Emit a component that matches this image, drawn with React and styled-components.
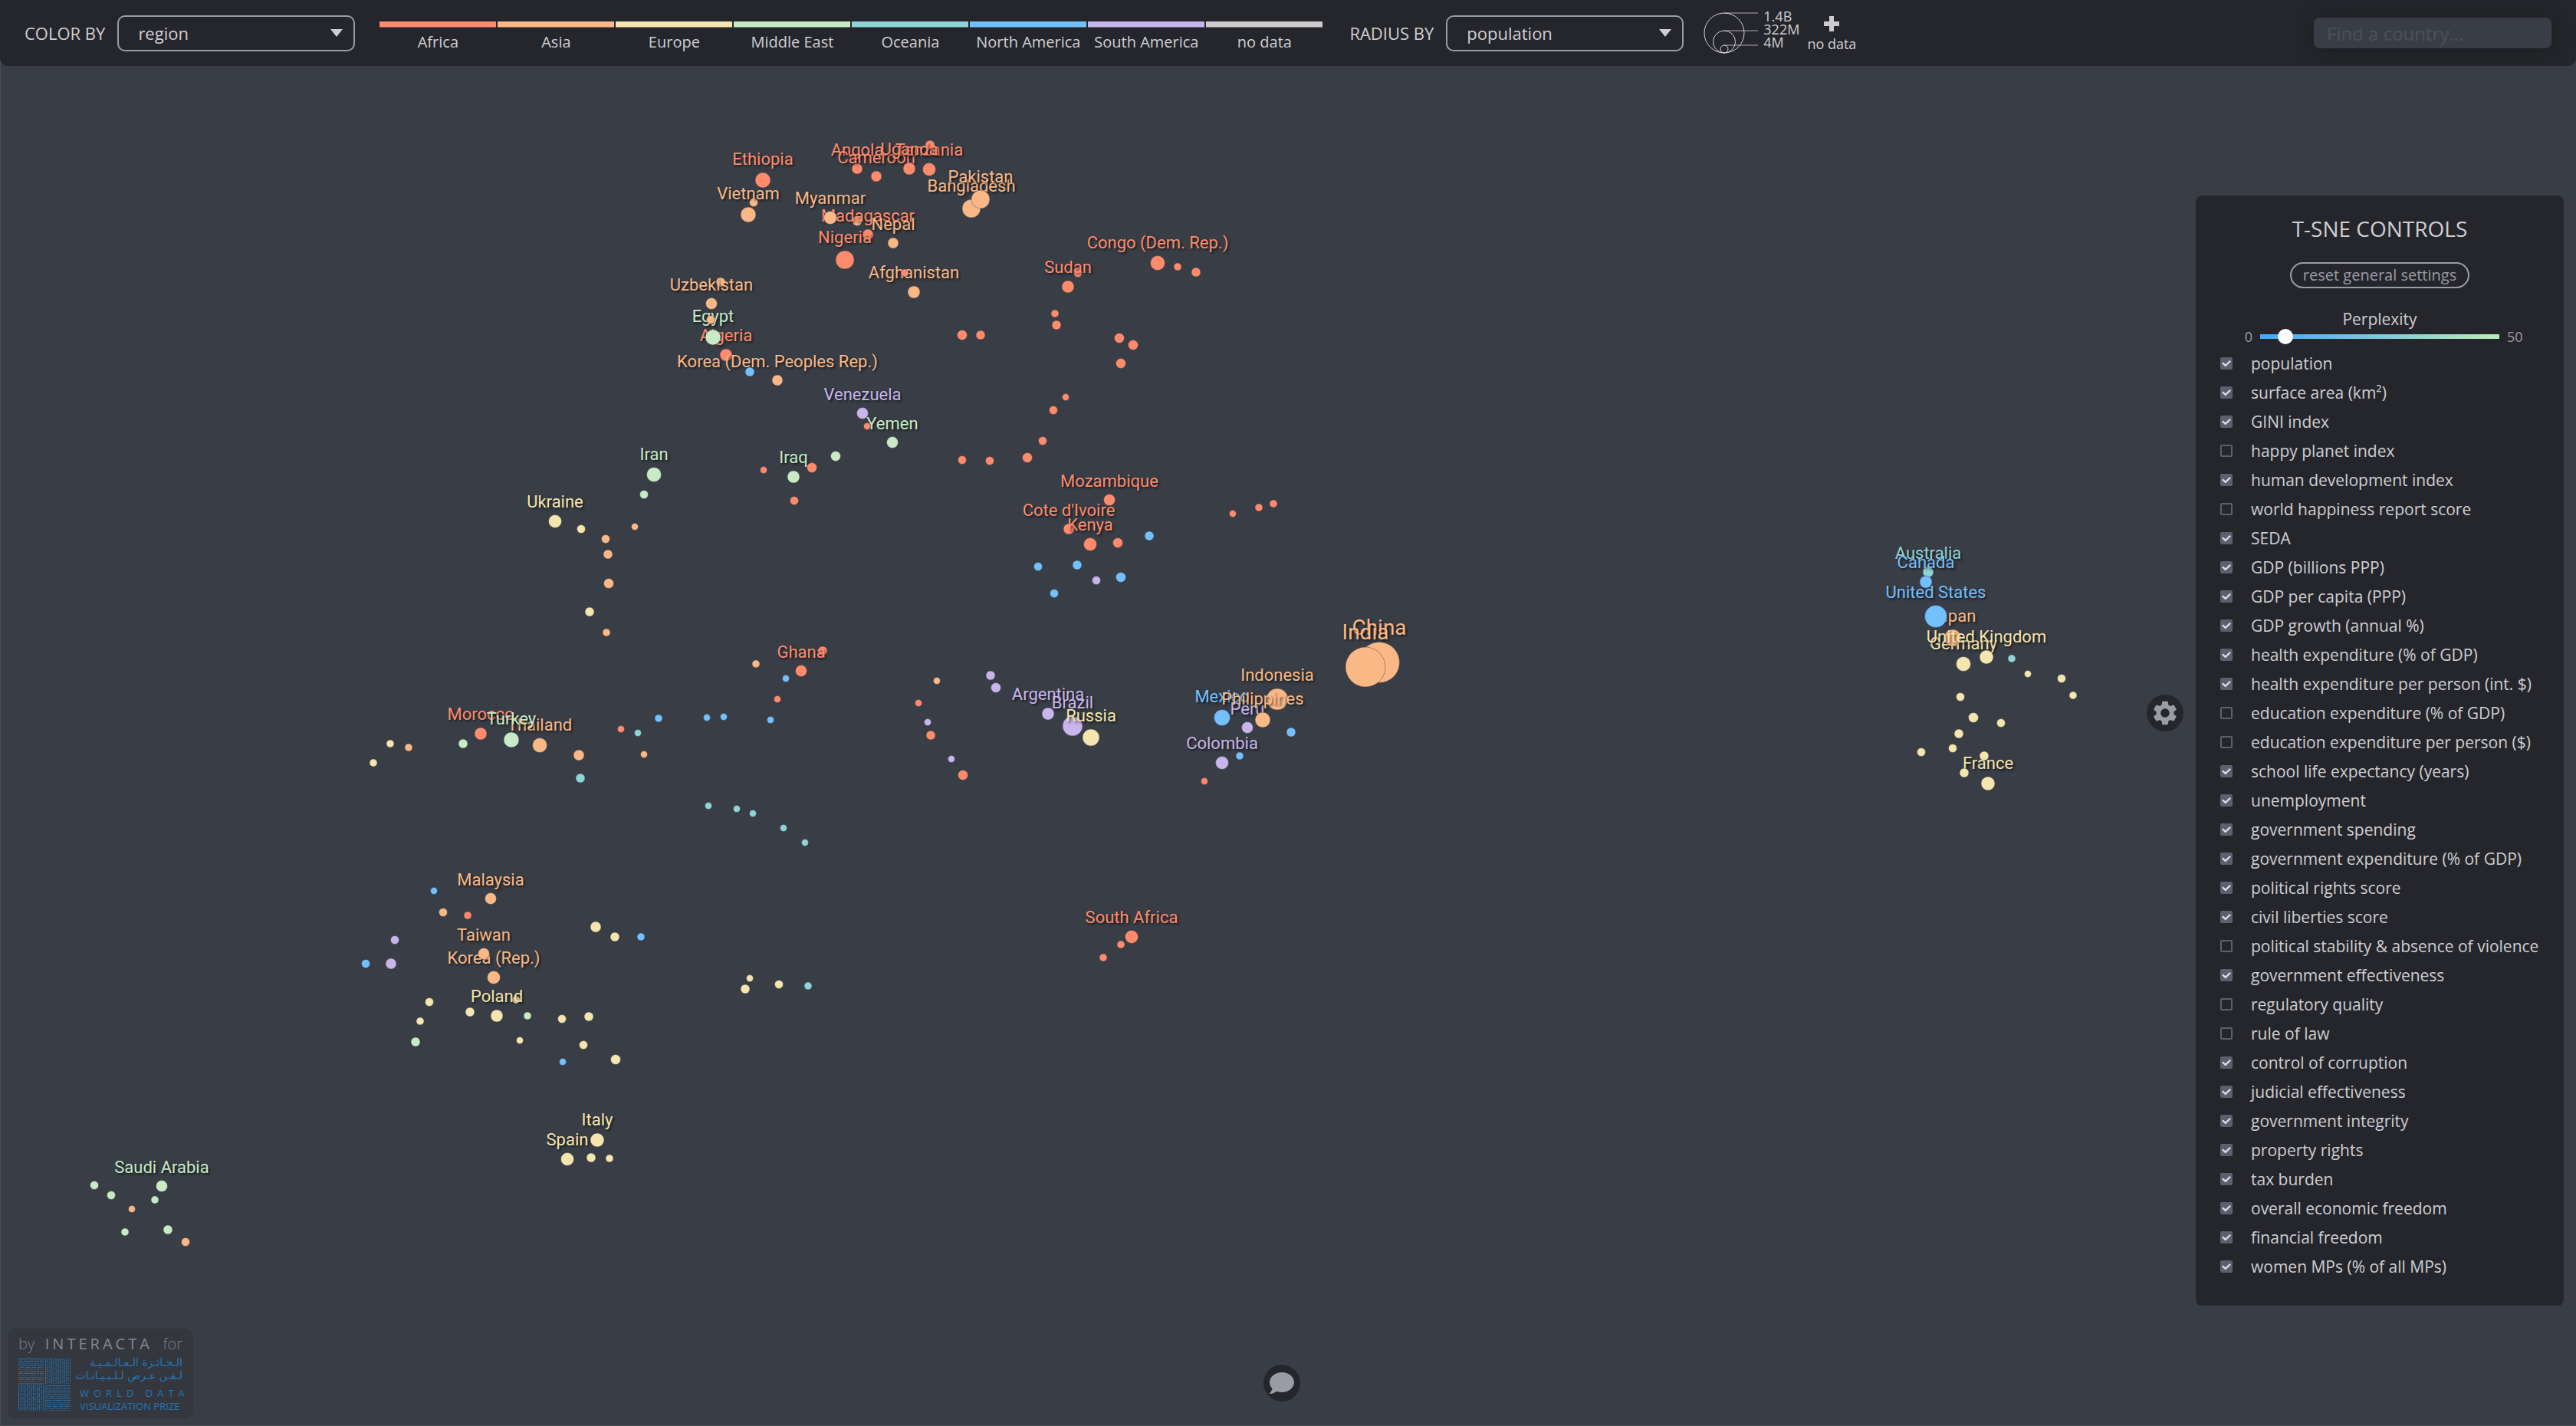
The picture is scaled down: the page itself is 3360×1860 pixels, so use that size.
import React, { useState } from 'react';
import styled, { createGlobalStyle } from 'styled-components';
import { MdSettings } from 'react-icons/md';
import { FaComment } from 'react-icons/fa';

const ink = {
  page: '#393e46',
  panel: '#25262b',
  text: '#cfcfd3',
  muted: '#9b9ba6',
  control: '#5b606e',
};

const regionColors = {
  Africa: '#ff8a6c',
  Asia: '#f9b886',
  Europe: '#f5e5ae',
  'Middle East': '#c8ebc6',
  Oceania: '#8fd4d6',
  'North America': '#73c0ff',
  'South America': '#c7b5eb',
  'no data': '#cccccc',
};

const codes = {
  af: 'Africa',
  as: 'Asia',
  eu: 'Europe',
  me: 'Middle East',
  oc: 'Oceania',
  na: 'North America',
  sa: 'South America',
};

/* Each entry: x, y, diameter, region code, optional label */
const countries = [
  [983, 264, 11, 'as'], [1118, 288, 13, 'as'], [1213, 189, 12, 'af'], [940, 368, 12, 'as'],
  [1406, 356, 11, 'af'], [1131, 556, 9, 'af'], [1073, 849, 12, 'af'], [673, 1304, 10, 'eu'],
  [1192, 381, 16, 'as', 'Afghanistan'],
  [947, 463, 16, 'af', 'Algeria'],
  [1118, 220, 14, 'af', 'Angola'],
  [1367, 931, 16, 'sa', 'Argentina'],
  [2515, 746, 14, 'oc', 'Australia'],
  [1267, 272, 24, 'as', 'Bangladesh'],
  [1399, 947, 26, 'sa', 'Brazil'],
  [1143, 230, 14, 'af', 'Cameroon'],
  [2512, 759, 16, 'na', 'Canada'],
  [1799, 864, 53, 'as', 'China'],
  [1594, 995, 17, 'sa', 'Colombia'],
  [1510, 343, 19, 'af', 'Congo (Dem. Rep.)'],
  [1394, 690, 14, 'af', "Cote d'Ivoire"],
  [930, 440, 20, 'me', 'Egypt'],
  [995, 235, 20, 'af', 'Ethiopia'],
  [2593, 1022, 18, 'eu', 'France'],
  [2561, 866, 19, 'eu', 'Germany'],
  [1045, 875, 15, 'af', 'Ghana'],
  [1781, 870, 52, 'as', 'India'],
  [1666, 912, 28, 'as', 'Indonesia'],
  [853, 619, 19, 'me', 'Iran'],
  [1035, 622, 16, 'me', 'Iraq'],
  [779, 1487, 18, 'eu', 'Italy'],
  [2547, 832, 22, 'as', 'Japan'],
  [1422, 710, 17, 'af', 'Kenya'],
  [1014, 496, 14, 'as', 'Korea (Dem. Peoples Rep.)'],
  [644, 1275, 17, 'as', 'Korea (Rep.)'],
  [1132, 306, 14, 'af', 'Madagascar'],
  [640, 1172, 15, 'as', 'Malaysia'],
  [1594, 936, 21, 'na', 'Mexico'],
  [627, 957, 16, 'af', 'Morocco'],
  [1447, 652, 15, 'af', 'Mozambique'],
  [1083, 284, 17, 'as', 'Myanmar'],
  [1165, 317, 14, 'as', 'Nepal'],
  [1102, 339, 24, 'af', 'Nigeria'],
  [1279, 260, 24, 'as', 'Pakistan'],
  [1627, 949, 15, 'sa', 'Peru'],
  [1647, 939, 20, 'as', 'Philippines'],
  [648, 1325, 16, 'eu', 'Poland'],
  [1423, 962, 22, 'eu', 'Russia'],
  [211, 1547, 15, 'me', 'Saudi Arabia'],
  [1476, 1222, 17, 'af', 'South Africa'],
  [740, 1512, 17, 'eu', 'Spain'],
  [1393, 374, 16, 'af', 'Sudan'],
  [631, 1244, 15, 'as', 'Taiwan'],
  [1212, 221, 17, 'af', 'Tanzania'],
  [704, 972, 19, 'as', 'Thailand'],
  [667, 965, 20, 'me', 'Turkey'],
  [1186, 220, 16, 'af', 'Uganda'],
  [724, 680, 17, 'eu', 'Ukraine'],
  [2591, 857, 18, 'eu', 'United Kingdom'],
  [2525, 804, 29, 'na', 'United States'],
  [928, 396, 15, 'as', 'Uzbekistan'],
  [1125, 539, 15, 'sa', 'Venezuela'],
  [976, 280, 20, 'as', 'Vietnam'],
  [1164, 577, 15, 'me', 'Yemen'],
  [1180, 356, 10, 'af'], [927, 417, 11, 'as'], [978, 485, 12, 'na'],
  [1536, 348, 10, 'af'], [1560, 355, 12, 'af'], [1376, 409, 10, 'af'], [1378, 424, 12, 'af'],
  [1255, 437, 13, 'af'], [1279, 437, 12, 'af'], [1460, 441, 13, 'af'], [1478, 450, 13, 'af'],
  [1462, 474, 13, 'af'], [1390, 518, 9, 'af'], [1374, 535, 11, 'af'], [1360, 575, 11, 'af'],
  [1340, 597, 13, 'af'], [1291, 601, 11, 'af'], [1255, 600, 11, 'af'], [1090, 595, 13, 'me'],
  [1059, 610, 13, 'af'], [996, 613, 9, 'af'], [1036, 653, 11, 'af'], [1458, 708, 13, 'af'],
  [1499, 699, 12, 'na'], [1354, 739, 11, 'na'], [1405, 737, 12, 'na'], [1430, 757, 11, 'sa'],
  [1462, 753, 13, 'na'], [1375, 774, 11, 'na'], [1608, 670, 9, 'af'], [1642, 662, 10, 'af'],
  [1661, 657, 10, 'af'], [1684, 955, 12, 'na'], [1617, 986, 10, 'na'], [1571, 1019, 9, 'af'],
  [1292, 881, 12, 'sa'], [1299, 897, 13, 'sa'], [1222, 888, 9, 'as'], [1198, 917, 9, 'af'],
  [1210, 942, 9, 'sa'], [1214, 959, 12, 'af'], [1241, 990, 9, 'sa'], [1256, 1011, 13, 'af'],
  [1462, 1232, 10, 'af'], [1439, 1249, 10, 'af'],
  [840, 645, 11, 'me'], [758, 690, 11, 'eu'], [828, 687, 9, 'as'], [790, 703, 11, 'as'],
  [793, 723, 12, 'as'], [794, 761, 13, 'as'], [769, 798, 12, 'eu'], [791, 825, 10, 'as'],
  [986, 866, 10, 'as'], [1025, 885, 9, 'na'], [1014, 912, 9, 'af'], [859, 937, 10, 'na'],
  [922, 936, 9, 'na'], [944, 935, 9, 'na'], [1005, 939, 9, 'na'], [810, 951, 9, 'af'],
  [832, 956, 9, 'oc'], [840, 984, 9, 'as'], [604, 970, 12, 'me'], [755, 985, 14, 'as'],
  [757, 1015, 12, 'oc'], [509, 970, 10, 'eu'], [533, 975, 10, 'as'], [487, 995, 10, 'eu'],
  [924, 1051, 9, 'oc'], [961, 1055, 9, 'oc'], [982, 1061, 9, 'oc'], [1022, 1080, 9, 'oc'],
  [1050, 1099, 9, 'oc'], [566, 1162, 9, 'na'], [578, 1190, 11, 'as'], [610, 1194, 10, 'af'],
  [515, 1226, 11, 'sa'], [477, 1257, 11, 'na'], [510, 1257, 14, 'sa'], [777, 1209, 14, 'eu'],
  [802, 1222, 12, 'eu'], [836, 1222, 10, 'na'], [978, 1276, 9, 'eu'], [972, 1290, 12, 'eu'],
  [1016, 1284, 11, 'eu'], [1054, 1286, 10, 'oc'], [613, 1320, 12, 'eu'], [688, 1325, 10, 'me'],
  [560, 1307, 11, 'eu'], [548, 1332, 10, 'eu'], [542, 1359, 12, 'me'], [678, 1357, 9, 'eu'],
  [733, 1329, 11, 'eu'], [768, 1326, 12, 'eu'], [761, 1363, 11, 'eu'], [734, 1385, 9, 'na'],
  [803, 1382, 13, 'eu'], [771, 1510, 12, 'eu'], [795, 1511, 10, 'eu'],
  [123, 1546, 11, 'me'], [145, 1559, 11, 'me'], [172, 1577, 9, 'as'], [202, 1565, 10, 'me'],
  [163, 1607, 10, 'me'], [219, 1604, 12, 'me'], [242, 1620, 11, 'as'],
  [2624, 859, 10, 'oc'], [2645, 879, 9, 'eu'], [2689, 885, 11, 'eu'], [2704, 907, 10, 'eu'],
  [2557, 909, 11, 'eu'], [2574, 936, 13, 'eu'], [2610, 943, 11, 'eu'], [2555, 957, 12, 'eu'],
  [2547, 976, 11, 'eu'], [2506, 981, 11, 'eu'], [2588, 986, 12, 'eu'], [2562, 1008, 12, 'eu'],
];

const indicators = [
  ['population', true],
  ['surface area (km²)', true],
  ['GINI index', true],
  ['happy planet index', false],
  ['human development index', true],
  ['world happiness report score', false],
  ['SEDA', true],
  ['GDP (billions PPP)', true],
  ['GDP per capita (PPP)', true],
  ['GDP growth (annual %)', true],
  ['health expenditure (% of GDP)', true],
  ['health expenditure per person (int. $)', true],
  ['education expenditure (% of GDP)', false],
  ['education expenditure per person ($)', false],
  ['school life expectancy (years)', true],
  ['unemployment', true],
  ['government spending', true],
  ['government expenditure (% of GDP)', true],
  ['political rights score', true],
  ['civil liberties score', true],
  ['political stability & absence of violence', false],
  ['government effectiveness', true],
  ['regulatory quality', false],
  ['rule of law', false],
  ['control of corruption', true],
  ['judicial effectiveness', true],
  ['government integrity', true],
  ['property rights', true],
  ['tax burden', true],
  ['overall economic freedom', true],
  ['financial freedom', true],
  ['women MPs (% of all MPs)', true],
];

const GlobalStyle = createGlobalStyle`
  *, *::before, *::after { box-sizing: border-box; }
  body {
    margin: 0;
    background: ${ink.page};
    color: ${ink.text};
    font-family: 'Open Sans', 'Noto Sans', sans-serif;
  }
  button, input, select { font-family: inherit; margin: 0; }
`;

const Page = styled.div`
  position: relative;
  min-height: 100vh;
  overflow: hidden;
  box-shadow: inset 1px -1px 0 #4b4f57;
`;

const TopBar = styled.header`
  position: relative;
  display: flex;
  align-items: center;
  height: 86px;
  padding: 0 32px;
  background: ${ink.panel};
  border-radius: 0 0 10px 10px;
`;

const Field = styled.div`
  display: flex;
  align-items: center;
  gap: 16px;
`;

const FieldLabel = styled.label`
  font-size: 22px;
  line-height: 30px;
  white-space: nowrap;
`;

const SelectBox = styled.div`
  display: grid;
  align-items: center;
  width: 310px;
  height: 47px;

  > * { grid-area: 1 / 1; }
`;

const Select = styled.select`
  appearance: none;
  width: 100%;
  height: 100%;
  padding: 0 48px 0 25px;
  border: 2px solid ${ink.muted};
  border-radius: 10px;
  background: transparent;
  color: ${ink.text};
  font-size: 22px;
`;

const Caret = styled.svg`
  justify-self: end;
  width: 16px;
  height: 10px;
  margin-right: 16px;
  fill: ${ink.text};
  pointer-events: none;
`;

const ColorLegend = styled.ul`
  display: flex;
  gap: 2px;
  height: 86px;
  margin: 0 35px 0 32px;
  padding: 28px 0 0;
  list-style: none;
`;

const LegendItem = styled.li`
  width: 152px;
  font-size: 20px;
  line-height: 28px;
  text-align: center;
  white-space: nowrap;

  &::before {
    content: '';
    display: block;
    height: 8px;
    margin-bottom: 5px;
    border-bottom: 1px solid rgba(0, 0, 0, 0.4);
    background: ${(p) => p.$color};
  }
`;

const SizeLegend = styled.div`
  display: flex;
  align-items: center;
  height: 86px;
  margin-left: 25px;
`;

const SizeRings = styled.svg`
  width: 72px;
  height: 54px;
  fill: none;
  stroke: ${ink.text};
`;

const SizeValues = styled.div`
  display: flex;
  flex-direction: column;
  margin-left: 7px;
  padding-bottom: 10px;
  font-size: 18px;
  line-height: 17px;
`;

const NoDataKey = styled.div`
  display: flex;
  flex-direction: column;
  align-items: center;
  gap: 4px;
  margin-left: 10px;
  padding-top: 4px;
  font-size: 18px;
  line-height: 24px;
`;

const PlusIcon = styled.svg`
  width: 20px;
  height: 20px;
  fill: #cccccc;
`;

const Search = styled.input`
  width: 310px;
  height: 40px;
  margin-left: auto;
  padding: 0 17px;
  border: 0;
  border-radius: 8px;
  background: ${ink.page};
  box-shadow: 0 4px 24px rgba(0, 0, 0, 0.25);
  color: ${ink.text};
  font-size: 24px;

  &::placeholder { color: #4c505b; opacity: 1; }
`;

const Plot = styled.svg`
  position: absolute;
  top: 0;
  left: 0;
  width: 100%;
  height: auto;
`;

const Dot = styled.circle`
  stroke: rgba(58, 61, 70, 0.45);
  stroke-width: 1px;
`;

const DotLabel = styled.text`
  font-family: Roboto, 'Open Sans', sans-serif;
  font-size: ${(p) => (p.$large ? 28 : 22)}px;
  text-anchor: middle;
  text-shadow: 2px 2px 3px rgba(0, 0, 0, 0.6);
`;

const Panel = styled.aside`
  position: absolute;
  top: 255px;
  right: 16px;
  display: flex;
  flex-direction: column;
  align-items: center;
  width: 480px;
  padding: 24px 16px 32px 32px;
  background: ${ink.panel};
  border-radius: 8px;
`;

const PanelHead = styled.div`
  display: flex;
  flex-direction: column;
  align-items: center;
  width: 100%;
  padding-right: 16px;
`;

const PanelTitle = styled.h2`
  margin: 0;
  font-size: 28px;
  font-weight: 400;
  line-height: 38px;
`;

const ResetButton = styled.button`
  height: 34px;
  margin: 25px 0 26px;
  padding: 0 15px;
  border: 2px solid ${ink.muted};
  border-radius: 17px;
  background: transparent;
  color: ${ink.muted};
  font-size: 20px;
  line-height: 28px;
`;

const SliderLabel = styled.label`
  font-size: 21px;
  line-height: 28px;
`;

const SliderRow = styled.div`
  display: flex;
  align-items: center;
  justify-content: center;
  gap: 10px;
  height: 18px;
  margin-bottom: 7px;
`;

const SliderBound = styled.span`
  width: 22px;
  color: ${ink.muted};
  font-size: 18px;
  line-height: 24px;
  text-align: ${(p) => p.$align};
`;

const Slider = styled.input`
  appearance: none;
  width: 312px;
  height: 6px;
  background: linear-gradient(90deg, #3fa9ff, #bdecb6);
  outline: 0;

  &::-webkit-slider-thumb {
    appearance: none;
    width: 20px;
    height: 20px;
    border-radius: 50%;
    background: #ffffff;
  }
`;

const IndicatorList = styled.ul`
  width: 100%;
  margin: 0;
  padding: 0;
  list-style: none;
`;

const IndicatorRow = styled.label`
  display: flex;
  align-items: center;
  gap: 24px;
  height: 38px;
  font-size: 21px;
  line-height: 28px;
  white-space: nowrap;
`;

const Checkbox = styled.input`
  appearance: none;
  display: grid;
  place-items: center;
  flex: none;
  width: 16px;
  height: 16px;
  border: 2px solid ${ink.control};
  border-radius: 2px;

  &:checked { background: ${ink.control}; }

  &:checked::after {
    content: '';
    width: 12px;
    height: 10px;
    background: #dcdce0;
    clip-path: polygon(0 50%, 14% 34%, 40% 62%, 86% 10%, 100% 26%, 40% 94%);
  }
`;

const RoundButton = styled.button`
  position: absolute;
  display: grid;
  place-items: center;
  width: 48px;
  height: 48px;
  padding: 0;
  border: 0;
  border-radius: 50%;
  background: ${ink.panel};
  color: ${ink.muted};
`;

const SettingsButton = styled(RoundButton)`
  top: calc(50% - 24px);
  right: 512px;
`;

const FeedbackButton = styled(RoundButton)`
  bottom: 32px;
  left: calc(50% - 32px);
`;

const Credits = styled.footer`
  position: absolute;
  bottom: 10px;
  left: 10px;
  display: flex;
  flex-direction: column;
  gap: 6px;
  width: 242px;
  height: 117px;
  padding: 7px 14px;
  border-radius: 10px;
  background: #34373e;
`;

const Byline = styled.p`
  display: flex;
  align-items: baseline;
  justify-content: space-between;
  margin: 0;
  color: #7b7d85;
  font-size: 20px;
  font-weight: 300;
  line-height: 26px;
`;

const Studio = styled.a`
  color: #868890;
  font-weight: 400;
  letter-spacing: 4px;
  text-decoration: none;
`;

const Prize = styled.a`
  display: flex;
  align-items: center;
  justify-content: space-between;
  height: 68px;
  color: #2176b9;
  text-decoration: none;
`;

const PrizeMark = styled.svg`
  width: 68px;
  height: 68px;
  stroke: #2176b9;
  stroke-width: 1px;
`;

const PrizeName = styled.span`
  display: flex;
  flex-direction: column;
  width: 134px;
  font-size: 13px;
  line-height: 17px;
  white-space: nowrap;
`;

const Arabic = styled.span`
  font-family: 'DejaVu Sans', sans-serif;
  font-size: 14px;
  text-align: right;
`;

const WideWords = styled.span`
  margin-top: 6px;
  letter-spacing: 6px;
`;

function Dropdown({ id, label, options }) {
  return (
    <Field>
      <FieldLabel htmlFor={id}>{label}</FieldLabel>
      <SelectBox>
        <Select id={id} defaultValue={options[0]}>
          {options.map((o) => (
            <option key={o}>{o}</option>
          ))}
        </Select>
        <Caret viewBox="0 0 16 10" aria-hidden="true">
          <path d="M0 0h16L8 10z" />
        </Caret>
      </SelectBox>
    </Field>
  );
}

function Country({ x, y, size, region, name }) {
  const fill = regionColors[codes[region]];
  return (
    <g>
      <Dot cx={x} cy={y} r={size / 2} fill={fill} />
      {name && (
        <DotLabel x={x} y={Math.round(y - size / 2 - 10)} fill={fill} $large={size > 40}>
          {name}
        </DotLabel>
      )}
    </g>
  );
}

const dashes = ['none', '6 1 2 1 3 1', '2 1 1 1', 'none', '1 1 5 1', '3 1 1 1 1 1'];

function WovenMark() {
  const steps = Array.from({ length: 13 }, (_, i) => i);
  const band = (key, ox, oy, vertical) =>
    steps.map((i) => {
      const at = i * 2.7 + 0.6;
      const ends = vertical
        ? { x1: ox + at, x2: ox + at, y1: oy, y2: oy + 33 }
        : { x1: ox, x2: ox + 33, y1: oy + at, y2: oy + at };
      return <line key={key + i} {...ends} strokeDasharray={dashes[i % dashes.length]} />;
    });
  return (
    <PrizeMark viewBox="0 0 68 68" aria-hidden="true">
      {band('a', 0, 0, false)}
      {band('b', 35, 0, true)}
      {band('c', 0, 35, true)}
      {band('d', 35, 35, false)}
    </PrizeMark>
  );
}

export default function App() {
  const [checked, setChecked] = useState(() => indicators.map(([, on]) => on));
  const [perplexity, setPerplexity] = useState(4);

  const toggle = (i) => setChecked(checked.map((c, j) => (i === j ? !c : c)));
  const reset = () => {
    setChecked(indicators.map(([, on]) => on));
    setPerplexity(4);
  };

  return (
    <Page>
      <GlobalStyle />
      <Plot viewBox="0 0 3360 1860" role="img" aria-label="Countries grouped by similarity">
        {countries.map(([x, y, size, region, name]) => (
          <Country key={`${x}-${y}`} x={x} y={y} size={size} region={region} name={name} />
        ))}
      </Plot>

      <TopBar>
        <Dropdown id="color-by" label="COLOR BY" options={['region', 'population']} />
        <ColorLegend>
          {Object.entries(regionColors).map(([name, color]) => (
            <LegendItem key={name} $color={color}>
              {name}
            </LegendItem>
          ))}
        </ColorLegend>
        <Dropdown id="radius-by" label="RADIUS BY" options={['population', 'surface area (km²)']} />
        <SizeLegend>
          <SizeRings viewBox="0 0 72 54" aria-hidden="true">
            <circle cx="28" cy="27" r="26" />
            <circle cx="28" cy="38.5" r="14.5" />
            <circle cx="28" cy="48" r="5" />
            <path d="M28 1h44M28 24h44M28 43h44" strokeOpacity="0.8" />
          </SizeRings>
          <SizeValues>
            <span>1.4B</span>
            <span>322M</span>
            <span>4M</span>
          </SizeValues>
          <NoDataKey>
            <PlusIcon viewBox="0 0 20 20" aria-hidden="true">
              <path d="M7 0h6v7h7v6h-7v7H7v-7H0V7h7z" />
            </PlusIcon>
            no data
          </NoDataKey>
        </SizeLegend>
        <Search type="text" placeholder="Find a country..." aria-label="Find a country" />
      </TopBar>

      <SettingsButton aria-label="Settings">
        <MdSettings size={38} />
      </SettingsButton>

      <Panel>
        <PanelHead>
          <PanelTitle>T-SNE CONTROLS</PanelTitle>
          <ResetButton onClick={reset}>reset general settings</ResetButton>
          <SliderLabel htmlFor="perplexity">Perplexity</SliderLabel>
          <SliderRow>
            <SliderBound $align="right">0</SliderBound>
            <Slider
              id="perplexity"
              type="range"
              min="0"
              max="50"
              value={perplexity}
              onChange={(e) => setPerplexity(Number(e.target.value))}
            />
            <SliderBound $align="left">50</SliderBound>
          </SliderRow>
        </PanelHead>
        <IndicatorList>
          {indicators.map(([name], i) => (
            <li key={name}>
              <IndicatorRow>
                <Checkbox type="checkbox" checked={checked[i]} onChange={() => toggle(i)} />
                {name}
              </IndicatorRow>
            </li>
          ))}
        </IndicatorList>
      </Panel>

      <Credits>
        <Byline>
          by <Studio href="#interacta">INTERACTA</Studio> for
        </Byline>
        <Prize href="#world-data-visualization-prize">
          <WovenMark />
          <PrizeName>
            <Arabic lang="ar" dir="rtl">الـجـائـزة الـعـالـمـيـة</Arabic>
            <Arabic lang="ar" dir="rtl">لـفـن عـرض لـلـبـيـانـات</Arabic>
            <WideWords>WORLD DATA</WideWords>
            <span>VISUALIZATION PRIZE</span>
          </PrizeName>
        </Prize>
      </Credits>

      <FeedbackButton aria-label="Send feedback">
        <FaComment size={32} />
      </FeedbackButton>
    </Page>
  );
}
